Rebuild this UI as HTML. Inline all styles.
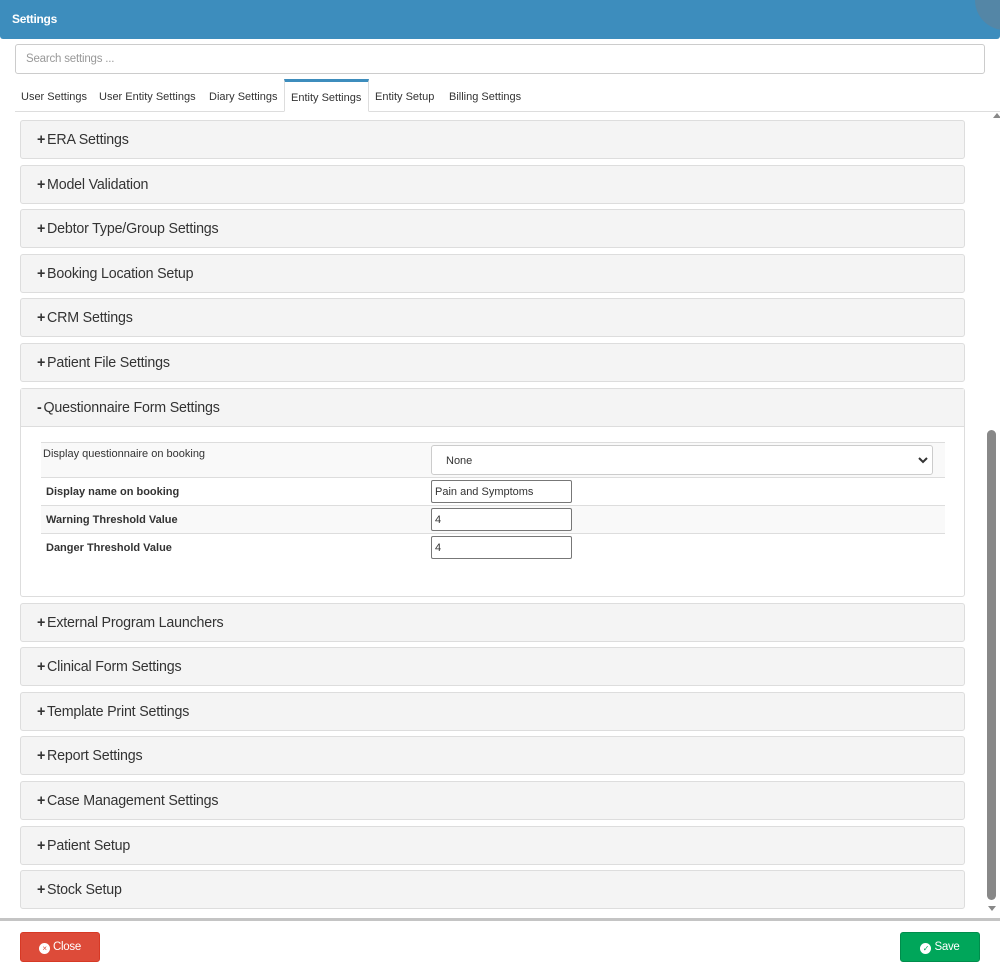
<!DOCTYPE html>
<html><head><meta charset="utf-8"><style>
*{box-sizing:border-box;margin:0;padding:0}
body{width:1000px;height:972px;position:relative;background:#fff;font-family:"Liberation Sans",sans-serif;overflow:hidden;color:#333}
.hdr{position:absolute;left:0;top:0;width:1000px;height:39px;background:#3d8dbd;border-radius:0 0 3px 3px;overflow:hidden}
.hdr b{position:absolute;left:12px;top:12px;color:#fff;font-size:12px;letter-spacing:-0.3px}
.circ{position:absolute;left:975px;top:-30px;width:60px;height:60px;border-radius:50%;background:#5a84a0;opacity:.8}
.search{position:absolute;left:15px;top:44px;width:970px;height:30px;border:1px solid #ccc;border-radius:3px;font-size:11.5px;color:#999;padding:8px 10px;letter-spacing:-0.2px}
.tabs{position:absolute;left:15px;top:79px;width:985px;height:33px;border-bottom:1px solid #ddd}
.tab{position:absolute;top:0;height:33px;font-size:11px;color:#333;padding-top:12px;white-space:nowrap}
.tab.act{border:1px solid #ddd;border-top:3px solid #3d8dbd;border-bottom:1px solid #fff;background:#fff;padding-top:10px;padding-left:6px}
.p{position:absolute;left:20px;width:945px;height:39px;background:#f4f4f4;border:1px solid #ddd;border-radius:3px}
.p span{position:absolute;left:16px;top:10px;font-size:15px;color:#333;transform:scaleX(.95);transform-origin:left;white-space:nowrap;letter-spacing:-0.2px}
.p span i{font-style:normal;font-weight:bold;margin-right:2px}
.open{height:209px;background:#fff}
.open .ph{position:absolute;left:0;top:0;width:100%;height:38px;background:#f4f4f4;border-bottom:1px solid #ddd}
.row{position:absolute;left:20px;width:904px;border-top:1px solid #ddd;font-size:11px}
.row.s{background:#f9f9f9}
.row .l{position:absolute;left:5px;top:8px;font-weight:bold}
.inp{position:absolute;left:390px;width:141px;height:23px;border:1px solid #777;border-radius:2px;background:#fff;font-size:11px;padding:5px 3px}
.sb{position:absolute;left:987px;top:430px;width:9px;height:470px;background:#888;border-radius:5px}
.foot{position:absolute;left:0;top:918px;width:1000px;height:3px;background:#c4c4c4}
.btn{position:absolute;top:932px;width:80px;height:30px;border-radius:3px;color:#fff;font-size:11.5px;text-align:center;padding-top:8px;letter-spacing:-0.3px}
.btn em{display:inline-block;width:11px;height:11px;border-radius:50%;background:#fff;vertical-align:-1px;margin-right:3px;font-style:normal;font-size:8px;line-height:11px}
</style></head><body>
<div class="hdr"><b>Settings</b><div class="circ"></div></div>
<div class="search">Search settings ...</div>
<div class="tabs">
<div class="tab" style="left:6px">User Settings</div>
<div class="tab" style="left:84px">User Entity Settings</div>
<div class="tab" style="left:194px">Diary Settings</div>
<div class="tab act" style="left:269px;width:85px">Entity Settings</div>
<div class="tab" style="left:360px">Entity Setup</div>
<div class="tab" style="left:434px">Billing Settings</div>
</div>
<div style="position:absolute;left:993px;top:113px;width:0;height:0;border-left:4px solid transparent;border-right:4px solid transparent;border-bottom:5px solid #888"></div>
<div style="position:absolute;left:988px;top:906px;width:0;height:0;border-left:4px solid transparent;border-right:4px solid transparent;border-top:5px solid #888"></div>

<div class="p" style="top:120px"><span><i>+</i>ERA Settings</span></div>
<div class="p" style="top:165px"><span><i>+</i>Model Validation</span></div>
<div class="p" style="top:209px"><span><i>+</i>Debtor Type/Group Settings</span></div>
<div class="p" style="top:254px"><span><i>+</i>Booking Location Setup</span></div>
<div class="p" style="top:298px"><span><i>+</i>CRM Settings</span></div>
<div class="p" style="top:343px"><span><i>+</i>Patient File Settings</span></div>
<div class="p open" style="top:388px"><div class="ph"></div><span><i>-</i>Questionnaire Form Settings</span>
<div class="row s" style="top:53px;height:36px"><div class="l" style="font-weight:normal;top:5px;left:2px">Display questionnaire on booking</div>
<div style="position:absolute;left:390px;top:2px;width:502px;height:30px;border:1px solid #ccc;border-radius:3px;background:#fff;font-size:11px;padding:9px 14px">None
<svg style="position:absolute;right:4px;top:10px" width="10" height="8" viewBox="0 0 10 8"><path d="M1 2l4 4 4-4" stroke="#333" stroke-width="2" fill="none"/></svg></div></div>
<div class="row" style="top:88px;height:28px"><div class="l">Display name on booking</div><div class="inp" style="top:2px">Pain and Symptoms</div></div>
<div class="row s" style="top:116px;height:28px"><div class="l">Warning Threshold Value</div><div class="inp" style="top:2px">4</div></div>
<div class="row" style="top:144px;height:28px"><div class="l">Danger Threshold Value</div><div class="inp" style="top:2px">4</div></div>
</div>
<div class="p" style="top:603px"><span><i>+</i>External Program Launchers</span></div>
<div class="p" style="top:647px"><span><i>+</i>Clinical Form Settings</span></div>
<div class="p" style="top:692px"><span><i>+</i>Template Print Settings</span></div>
<div class="p" style="top:736px"><span><i>+</i>Report Settings</span></div>
<div class="p" style="top:781px"><span><i>+</i>Case Management Settings</span></div>
<div class="p" style="top:826px"><span><i>+</i>Patient Setup</span></div>
<div class="p" style="top:870px"><span><i>+</i>Stock Setup</span></div>
<div class="sb"></div>
<div class="foot"></div>
<div class="btn" style="left:20px;background:#dd4b39;border:1px solid #d73925"><em style="color:#dd4b39">×</em>Close</div>
<div class="btn" style="left:900px;background:#00a65a;border:1px solid #008d4c"><em style="color:#00a65a">✓</em>Save</div>
</body></html>
